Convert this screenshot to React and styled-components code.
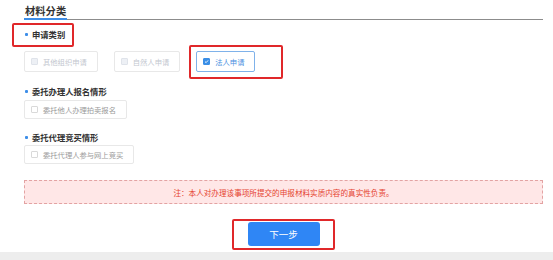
import React from 'react';
import styled, { createGlobalStyle, css } from 'styled-components';

const Global = createGlobalStyle`
  html, body { margin: 0; padding: 0; background: #fff; }
  body { font-family: "Noto Sans CJK SC", "Noto Sans", sans-serif; }
  * { box-sizing: border-box; }
`;

const highlight = css`
  position: relative;
  &::after {
    content: '';
    position: absolute;
    top: ${(p) => p.$hl[0]}px;
    right: ${(p) => p.$hl[1]}px;
    bottom: ${(p) => p.$hl[2]}px;
    left: ${(p) => p.$hl[3]}px;
    border: 2px solid #e0282a;
    border-radius: 2px;
    pointer-events: none;
  }
`;

const Page = styled.div`
  width: 553px;
  height: 260px;
  display: flex;
  flex-direction: column;
  background: #ededed;
`;

const Main = styled.div`
  height: 252px;
  background: #fff;
  padding: 0 10px 0 24px;
  display: flex;
  flex-direction: column;
`;

const Header = styled.div`
  height: 20px;
  padding-top: 4px;
  border-bottom: 1px solid #8c8c8c;
  display: flex;
  align-items: flex-start;
`;

const Title = styled.div`
  font-size: 10.3px;
  font-weight: 700;
  color: #333;
  line-height: 14px;
  padding: 0 1px;
  border-bottom: 2px solid #3d8ee8;
  margin-bottom: -1px;
`;

const Section = styled.div`
  display: flex;
  flex-direction: column;
  align-items: flex-start;
  margin-top: ${(p) => p.$top}px;
`;

const Label = styled.div`
  display: inline-flex;
  align-items: center;
  gap: 4px;
  height: 12px;
  font-size: 8.3px;
  font-weight: 700;
  color: #333;
  padding-left: 1px;
  &::before {
    content: '';
    width: 3px;
    height: 3px;
    border-radius: 1px;
    background: #3d8ee8;
  }
  ${(p) => p.$hl && highlight}
`;

const Row = styled.div`
  display: flex;
  gap: 16px;
  margin-top: ${(p) => p.$gap}px;
`;

const Option = styled.div`
  display: flex;
  align-items: center;
  gap: 5px;
  height: ${(p) => p.$h}px;
  padding: 0 10px 0 6px;
  border: 1px solid ${(p) => (p.$checked ? '#7fb2ea' : '#e8e8e8')};
  border-radius: 2px;
  font-size: 7.3px;
  color: ${(p) => (p.$checked ? '#4a8fe0' : p.$disabled ? '#c3c7cf' : '#9a9a9a')};
  background: #fff;
  white-space: nowrap;
  ${(p) => p.$hl && highlight}
`;

const Box = styled.span`
  width: 7px;
  height: 7px;
  border-radius: 1px;
  flex: none;
  display: flex;
  align-items: center;
  justify-content: center;
  border: 1px solid ${(p) => (p.$checked ? '#3a8ee6' : p.$disabled ? '#dfe3ea' : '#d9d9d9')};
  background: ${(p) => (p.$checked ? '#3a8ee6' : p.$disabled ? '#edf0f5' : '#fff')};
`;

const Notice = styled.div`
  margin-top: 16px;
  height: 24px;
  border: 1px dashed #e3a3a3;
  background: #ffe7e7;
  color: #e5432f;
  font-size: 7.6px;
  display: flex;
  align-items: center;
  justify-content: center;
`;

const Actions = styled.div`
  display: flex;
  justify-content: center;
  margin-top: 18px;
`;

const Button = styled.button`
  width: 72px;
  height: 24px;
  border: none;
  border-radius: 3px;
  background: #2f86f5;
  color: #fff;
  font-family: inherit;
  font-size: 9.5px;
  padding: 0;
  ${(p) => p.$hl && highlight}
`;

const Check = ({ checked, disabled, label, hl, h = 21 }) => (
  <Option $checked={checked} $disabled={disabled} $hl={hl} $h={h}>
    <Box $checked={checked} $disabled={disabled}>
      {checked && (
        <svg width="5" height="5" viewBox="0 0 10 10">
          <path d="M2 5.2 L4.2 7.3 L8.2 2.8" fill="none" stroke="#fff" strokeWidth="1.8" />
        </svg>
      )}
    </Box>
    {label}
  </Option>
);

export default function App() {
  return (
    <Page>
      <Global />
      <Main>
        <Header>
          <Title>材料分类</Title>
        </Header>
        <Section $top={8}>
          <Label $hl={[-5, -9, -7, -12]}>申请类别</Label>
          <Row $gap={11}>
            <Check disabled label="其他组织申请" />
            <Check disabled label="自然人申请" />
            <Check checked label="法人申请" hl={[-7, -29, -8, -8]} />
          </Row>
        </Section>
        <Section $top={13}>
          <Label>委托办理人报名情形</Label>
          <Row $gap={3}>
            <Check label="委托他人办理拍卖报名" h={19} />
          </Row>
        </Section>
        <Section $top={12}>
          <Label>委托代理竞买情形</Label>
          <Row $gap={2}>
            <Check label="委托代理人参与网上竞买" h={19} />
          </Row>
        </Section>
        <Notice>注：本人对办理该事项所提交的申报材料实质内容的真实性负责。</Notice>
        <Actions>
          <Button $hl={[-3, -15, -4, -16]}>下一步</Button>
        </Actions>
      </Main>
    </Page>
  );
}
